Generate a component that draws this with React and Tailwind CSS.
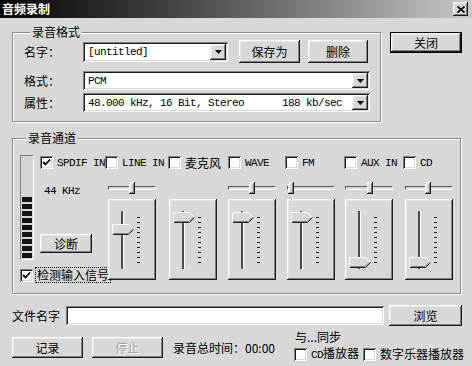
const raised =
  'shadow-[inset_-1px_-1px_0_#1c1c1c,inset_1px_1px_0_#ffffff,inset_-2px_-2px_0_#808080,inset_2px_2px_0_#e6e6e6]';
const sunken =
  'shadow-[inset_1px_1px_0_#808080,inset_-1px_-1px_0_#ffffff,inset_2px_2px_0_#1c1c1c,inset_-2px_-2px_0_#d8d8d8]';
const group = 'border border-[#8a8a8a] shadow-[inset_1px_1px_0_#ffffff,1px_1px_0_#ffffff]';
const cjk = "font-['Noto_Sans_CJK_SC',sans-serif]";
const mono = "font-['Liberation_Mono','Noto_Sans_CJK_SC',monospace] text-[11px] tracking-[-0.6px]";

function Btn({ className = '', children, disabled }) {
  return (
    <div className={`flex shrink-0 items-center justify-center bg-[#d8d8d8] ${raised} ${className}`}>
      <span className={disabled ? 'text-[#a2a2a2] [text-shadow:1px_1px_0_#ffffff]' : ''}>{children}</span>
    </div>
  );
}

function Arrow() {
  return (
    <div className={`flex h-full w-[16px] items-center justify-center bg-[#d8d8d8] ${raised}`}>
      <svg width="7" height="4" viewBox="0 0 7 4">
        <polygon points="0,0 7,0 3.5,4" fill="#000" />
      </svg>
    </div>
  );
}

function Combo({ className = '', children }) {
  return (
    <div className={`flex shrink-0 items-center bg-white p-[2px] ${sunken} ${className}`}>
      <div className="flex flex-1 items-center pl-[3px]">{children}</div>
      <Arrow />
    </div>
  );
}

function Box({ checked, className = '' }) {
  return (
    <div className={`flex h-[13px] w-[13px] shrink-0 items-center justify-center bg-white ${sunken} ${className}`}>
      {checked && (
        <svg width="9" height="9" viewBox="0 0 9 9">
          <polyline points="1,4 3.5,6.5 8,1.5" fill="none" stroke="#000" strokeWidth="1.8" />
        </svg>
      )}
    </div>
  );
}

function Check({ label, checked, className = '', font = mono }) {
  return (
    <div className={`flex shrink-0 items-center ${className}`}>
      <Box checked={checked} />
      <span className={`ml-[4px] whitespace-nowrap ${font}`}>{label}</span>
    </div>
  );
}

function HSlider({ thumb }) {
  return (
    <div className="relative h-[12px] w-[48px]">
      <div className="mt-[4px] h-[4px] border border-t-[#606060] border-l-[#606060] border-b-white border-r-white" />
      <div className={`absolute top-0 h-[12px] w-[6px] bg-[#d8d8d8] ${raised} ${thumb}`} />
    </div>
  );
}

function VBox({ thumb }) {
  return (
    <div className={`relative mt-[5px] flex h-[81px] w-[48px] bg-[#d8d8d8] pl-[13px] pt-[12px] ${raised}`}>
      <div className="h-[58px] w-[3px] border-l-2 border-r border-l-[#4a4a4a] border-r-white" />
      <div className="ml-[13px] mt-[6px] flex flex-col gap-[4px]">
        {Array.from({ length: 10 }).map((_, i) => (
          <div key={i} className="h-[1px] w-[3px] bg-[#222]" />
        ))}
      </div>
      <svg className={`absolute left-[4px] ${thumb}`} width="22" height="11" viewBox="0 0 22 11">
        <polygon points="0.5,0.5 16.5,0.5 21.5,5.5 16.5,10.5 0.5,10.5" fill="#d8d8d8" />
        <polyline points="0.5,10.5 0.5,0.5 16.5,0.5 21,5" fill="none" stroke="#ffffff" />
        <polyline points="1,10.5 16.5,10.5 21.5,5.5" fill="none" stroke="#222" />
        <polyline points="1.5,9.5 16,9.5 20,5.5" fill="none" stroke="#808080" />
      </svg>
    </div>
  );
}

function Channel({ className = '', hthumb, thumb }) {
  return (
    <div className={`flex shrink-0 flex-col pt-[13px] ${className}`}>
      {hthumb ? <HSlider thumb={hthumb} /> : <div className="h-[12px]" />}
      <VBox thumb={thumb} />
    </div>
  );
}

export default function App() {
  return (
    <div className={`h-[366px] w-[472px] overflow-hidden bg-[#d8d8d8] text-[12px] leading-[14px] text-black ${cjk}`}>
      <div className="flex h-[18px] items-center justify-between bg-linear-to-r from-[#060606] to-[#cacaca] pl-[2px] pr-[4px]">
        <span className="font-bold text-white">音频录制</span>
        <div className={`flex h-[14px] w-[15px] items-center justify-center bg-[#d8d8d8] ${raised}`}>
          <svg width="8" height="7" viewBox="0 0 8 7">
            <path d="M0.5 0.5 L7.5 6.5 M7.5 0.5 L0.5 6.5" stroke="#000" strokeWidth="1.6" />
          </svg>
        </div>
      </div>

      <div className="flex items-start">
        <fieldset className={`ml-[12px] mt-[7px] h-[97px] w-[369px] pl-[11px] ${group}`}>
          <legend className="ml-[6px] bg-[#d8d8d8] px-[2px]">录音格式</legend>
          <div className="mt-[1px] flex h-[23px] items-center">
            <span className="w-[59px] shrink-0">名字：</span>
            <Combo className="h-[20px] w-[145px]">
              <span className={mono}>[untitled]</span>
            </Combo>
            <Btn className="ml-[11px] h-[23px] w-[61px]">保存为</Btn>
            <Btn className="ml-[8px] h-[23px] w-[60px]">删除</Btn>
          </div>
          <div className="mt-[8px] flex h-[19px] items-center">
            <span className="w-[59px] shrink-0">格式：</span>
            <Combo className="h-[19px] w-[287px]">
              <span className={mono}>PCM</span>
            </Combo>
          </div>
          <div className="mt-[3px] flex h-[19px] items-center">
            <span className="w-[59px] shrink-0">属性：</span>
            <Combo className="h-[19px] w-[287px]">
              <div className={`flex flex-1 justify-between pr-[10px] whitespace-pre ${mono}`}>
                <span>48.000 kHz, 16 Bit, Stereo</span>
                <span>188 kb/sec</span>
              </div>
            </Combo>
          </div>
        </fieldset>
        <div className="ml-[9px] mt-[14px] h-[21px] w-[72px] border border-black">
          <Btn className="h-full w-full">关闭</Btn>
        </div>
      </div>

      <fieldset className={`ml-[12px] mt-[9px] h-[163px] w-[449px] pl-[7px] ${group}`}>
        <legend className="ml-[6px] bg-[#d8d8d8] px-[2px]">录音通道</legend>
        <div className="flex items-start">
          <div className="w-[20px] shrink-0 pt-[10px]">
            <div className="flex h-[105px] w-[14px] flex-col justify-end gap-[2px] border border-t-[#808080] border-l-[#808080] border-b-white border-r-white bg-[#d4d4d4] px-[1px] pb-[1px]">
              {Array.from({ length: 9 }).map((_, i) => (
                <div key={i} className="h-[5px] w-full shrink-0 bg-[#141414]" />
              ))}
            </div>
            <div className="mt-[7px] flex items-center whitespace-nowrap">
              <Box checked />
              <span className="ml-[2px] border border-dotted border-black px-[1px]">检测输入信号</span>
            </div>
          </div>

          <div className="pt-[11px]">
            <div className="flex h-[13px] items-center">
              <Check checked label="SPDIF IN" className="w-[65px]" />
              <Check label="LINE IN" className="w-[63px]" />
              <Check label="麦克风" className="w-[60px]" font={cjk} />
              <Check label="WAVE" className="w-[57px]" />
              <Check label="FM" className="w-[59px]" />
              <Check label="AUX IN" className="w-[59px]" />
              <Check label="CD" />
            </div>
            <div className="flex items-start">
              <div className="flex w-[68px] shrink-0 flex-col items-start">
                <span className={`ml-[4px] mt-[15px] ${mono}`}>44 KHz</span>
                <Btn className="mt-[36px] h-[19px] w-[52px]">诊断</Btn>
              </div>
              <Channel hthumb="left-[21px]" thumb="top-[25px]" />
              <Channel className="ml-[13px]" thumb="top-[13px]" />
              <Channel className="ml-[11px]" hthumb="left-[21px]" thumb="top-[13px]" />
              <Channel className="ml-[11px]" hthumb="left-[1px]" thumb="top-[13px]" />
              <Channel className="ml-[10px]" hthumb="left-[22px]" thumb="top-[58px]" />
              <Channel className="ml-[12px]" hthumb="left-[20px]" thumb="top-[58px]" />
            </div>
          </div>
        </div>
      </fieldset>

      <div className="ml-[12px] mt-[11px] flex h-[21px] items-center">
        <span className="w-[54px] shrink-0">文件名字</span>
        <div className={`h-[19px] w-[318px] bg-white ${sunken}`} />
        <Btn className="ml-[5px] h-[21px] w-[73px]">浏览</Btn>
      </div>

      <div className="ml-[12px] flex items-start">
        <div className="mt-[11px] flex w-[282px] shrink-0 items-center">
          <Btn className="h-[21px] w-[71px]">记录</Btn>
          <Btn disabled className="ml-[9px] h-[21px] w-[71px]">停止</Btn>
          <span className="ml-[10px] whitespace-nowrap">录音总时间：00:00</span>
        </div>
        <div className="mt-[4px] flex flex-col">
          <span className="ml-[1px]">与...同步</span>
          <div className="mt-[2px] flex items-center">
            <Box />
            <span className="ml-[4px] whitespace-nowrap">
              <span className={mono}>CD</span>播放器
            </span>
            <Box className="ml-[4px]" />
            <span className="ml-[4px] whitespace-nowrap">数字乐器播放器</span>
          </div>
        </div>
      </div>
    </div>
  );
}
